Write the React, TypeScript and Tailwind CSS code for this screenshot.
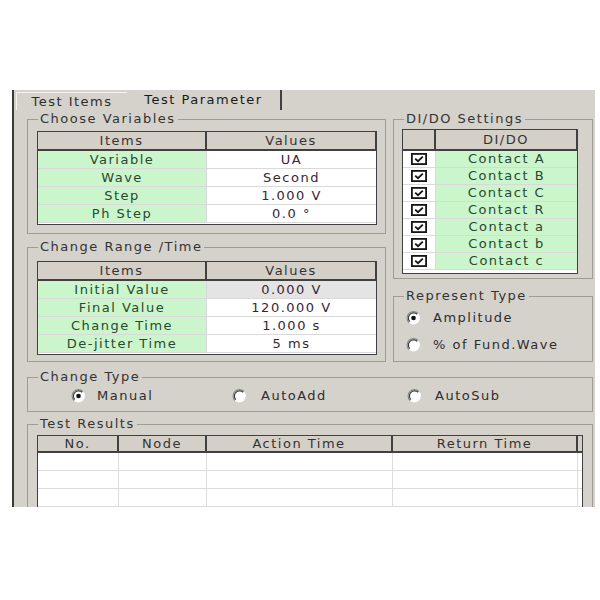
import React from "react";

const font = "font-['DejaVu_Sans','Liberation_Sans',sans-serif] text-[13px] tracking-[1.5px]";

function Radio({ checked }: { checked?: boolean }) {
  return (
    <svg width="15" height="14" viewBox="0 0 12 12" className="shrink-0">
      <circle cx="6" cy="6" r="5.5" fill="#fff" />
      <path d="M9.89 2.11 A5.5 5.5 0 0 0 2.11 9.89" stroke="#8a8a8a" strokeWidth="1" fill="none" />
      <path d="M9.18 2.82 A4.5 4.5 0 0 0 2.82 9.18" stroke="#3a3a3a" strokeWidth="1" fill="none" />
      {checked && <circle cx="6" cy="6" r="2" fill="#111" />}
    </svg>
  );
}

function Check() {
  return (
    <svg width="16" height="12" viewBox="0 0 16 12">
      <rect x="0.9" y="0.9" width="14.2" height="10.2" fill="#fff" stroke="#151515" strokeWidth="1.8" />
      <path d="M4.2 5.6 L7 8.2 L11.8 3.6" stroke="#151515" strokeWidth="1.9" fill="none" />
    </svg>
  );
}

function Group({
  title,
  className,
  inner,
  children,
}: {
  title: string;
  className: string;
  inner: string;
  children?: React.ReactNode;
}) {
  return (
    <fieldset className={"border border-[#9f9c95] min-w-0 " + className}>
      <legend className="ml-[10px] px-[2px] leading-[14px] text-[#333]">{title}</legend>
      <div className={inner}>{children}</div>
    </fieldset>
  );
}

function ParamTable({ rows, selectFirst }: { rows: [string, string][]; selectFirst?: boolean }) {
  return (
    <div className="w-[340px] border border-[#404040] bg-white">
      <div className="flex h-[19px] bg-[#d4d0c8] border-b-2 border-[#404040] text-[#333]">
        <div className="w-[169px] border-r-2 border-[#404040] flex items-center justify-center">Items</div>
        <div className="flex-1 border-r border-[#404040] flex items-center justify-center">Values</div>
      </div>
      {rows.map(([a, b], i) => (
        <div key={a} className="flex h-[18px] border-b border-[#d9d9d9]">
          <div className="w-[169px] bg-[#cbf6cb] border-r border-[#d9d9d9] flex items-center justify-center text-[#2a4732]">
            {a}
          </div>
          <div
            className={
              "flex-1 flex items-center justify-center text-[#382636] " +
              (selectFirst && i === 0 ? "bg-[#e4e4e4]" : "bg-white")
            }
          >
            {b}
          </div>
        </div>
      ))}
      <div className="h-[1px] bg-white" />
    </div>
  );
}

export default function App() {
  const contacts = ["Contact A", "Contact B", "Contact C", "Contact R", "Contact a", "Contact b", "Contact c"];
  return (
    <div className={"w-[600px] h-[600px] bg-white pt-[90px] pl-[12px] " + font}>
      <div className="w-[583px] h-[417px] bg-[#d5d2cb] border-l-2 border-[#3a3a3a] overflow-hidden flex flex-col">
        {/* tabs */}
        <div className="flex h-[20px] pl-[2px] shrink-0">
          <div className="mt-[2px] w-[111px] border-t border-l border-[#f4f3f0] flex items-center justify-center text-[#2e2e2e]">
            Test Items
          </div>
          <div className="w-[155px] border-r-2 border-[#404040] flex items-center justify-center text-[#1a1a1a]">
            Test Parameter
          </div>
        </div>

        <div className="pl-[13px] flex flex-col">
          {/* top row */}
          <div className="flex gap-[7px]">
            <div className="w-[359px] flex flex-col">
              <Group title="Choose Variables" className="mt-[2px] h-[122px]" inner="pl-[9px] pt-[5px]">
                <ParamTable
                  rows={[
                    ["Variable", "UA"],
                    ["Wave", "Second"],
                    ["Step", "1.000 V"],
                    ["Ph Step", "0.0 °"],
                  ]}
                />
              </Group>
              <Group title="Change Range /Time" className="mt-[6px] h-[122px]" inner="pl-[9px] pt-[7px]">
                <ParamTable
                  selectFirst
                  rows={[
                    ["Initial Value", "0.000 V"],
                    ["Final Value", "120.000 V"],
                    ["Change Time", "1.000 s"],
                    ["De-jitter Time", "5 ms"],
                  ]}
                />
              </Group>
            </div>
            <div className="w-[200px] flex flex-col">
              <Group title="DI/DO Settings" className="mt-[2px] h-[167px]" inner="pl-[8px] pt-[3px]">
                <div className="w-[176px] border border-[#404040] bg-white">
                  <div className="flex h-[21px] bg-[#d4d0c8] border-b-2 border-[#404040] text-[#333]">
                    <div className="w-[33px] border-r-2 border-[#404040]" />
                    <div className="flex-1 border-r border-[#404040] flex items-center justify-center">DI/DO</div>
                  </div>
                  {contacts.map((c) => (
                    <div key={c} className="flex h-[17px] border-b border-[#d9d9d9]">
                      <div className="w-[33px] bg-white border-r border-[#d9d9d9] flex items-center justify-center">
                        <Check />
                      </div>
                      <div className="flex-1 bg-[#cbf6cb] flex items-center justify-center text-[#2a4732]">{c}</div>
                    </div>
                  ))}
                  <div className="h-[3px] bg-white" />
                </div>
              </Group>
              <Group title="Represent Type" className="mt-[10px] h-[73px]" inner="pl-[12px] pt-[1px]">
                <div className="h-[27px] flex items-center gap-[12px] text-[#2e2e2e]">
                  <Radio checked />
                  <span>Amplitude</span>
                </div>
                <div className="h-[27px] flex items-center gap-[12px] text-[#2e2e2e]">
                  <Radio />
                  <span>% of Fund.Wave</span>
                </div>
              </Group>
            </div>
          </div>

          <Group title="Change Type" className="mt-[8px] w-[566px] h-[42px]" inner="pl-[43px]">
            <div className="flex h-[24px] items-center text-[#2e2e2e]">
              <div className="w-[161px] flex items-center gap-[11px]">
                <Radio checked />
                <span>Manual</span>
              </div>
              <div className="w-[175px] flex items-center gap-[14px]">
                <Radio />
                <span>AutoAdd</span>
              </div>
              <div className="flex items-center gap-[13px]">
                <Radio />
                <span>AutoSub</span>
              </div>
            </div>
          </Group>

          <Group title="Test Results" className="mt-[5px] w-[566px] h-[140px]" inner="pl-[9px] pt-[4px]">
            <div className="w-[546px] border border-[#404040] bg-white">
              <div className="flex h-[17px] bg-[#d4d0c8] border-b-2 border-[#404040] text-[#333]">
                <div className="w-[81px] border-r-2 border-[#404040] flex items-center justify-center">No.</div>
                <div className="w-[88px] border-r-2 border-[#404040] flex items-center justify-center">Node</div>
                <div className="w-[186px] border-r-2 border-[#404040] flex items-center justify-center">Action Time</div>
                <div className="w-[185px] border-r-2 border-[#404040] flex items-center justify-center">Return Time</div>
                <div className="flex-1" />
              </div>
              {[0, 1, 2, 3, 4].map((r) => (
                <div key={r} className="flex h-[18px] border-b border-[#dcdcdc]">
                  <div className="w-[81px] border-r border-[#dcdcdc]" />
                  <div className="w-[88px] border-r border-[#dcdcdc]" />
                  <div className="w-[186px] border-r border-[#dcdcdc]" />
                  <div className="w-[185px] border-r border-[#dcdcdc]" />
                  <div className="flex-1" />
                </div>
              ))}
            </div>
          </Group>
        </div>
      </div>
    </div>
  );
}
